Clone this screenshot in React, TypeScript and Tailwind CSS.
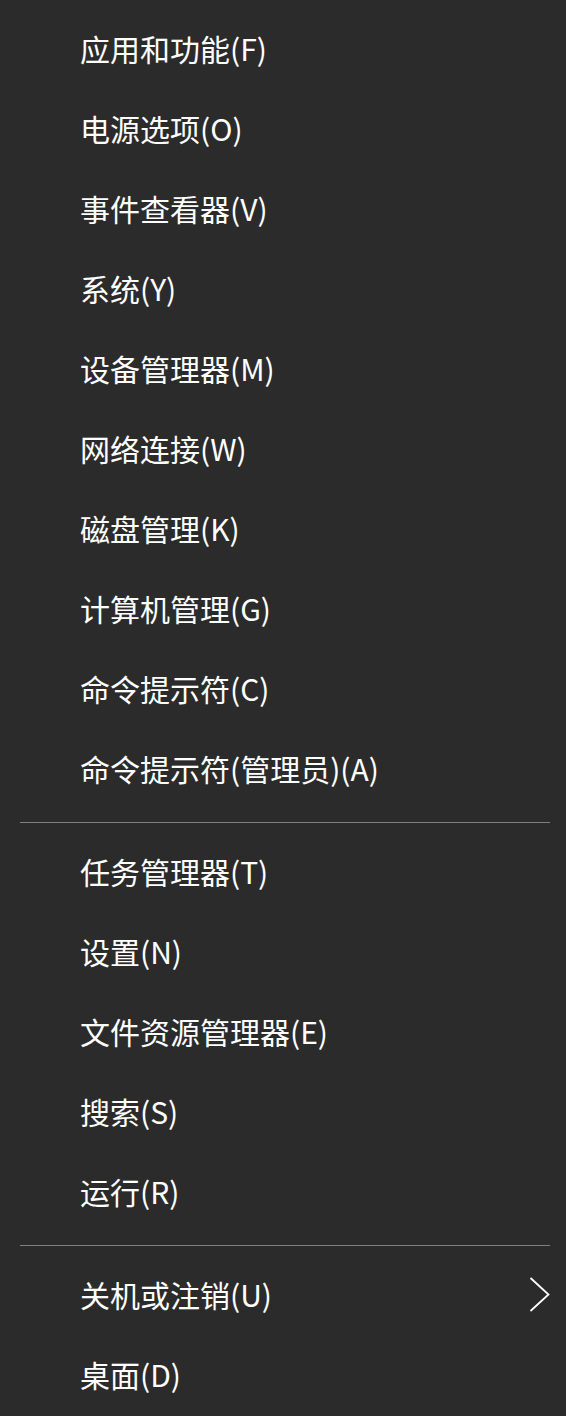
interface MenuItem {
  label: string;
  submenu?: boolean;
}

const groups: MenuItem[][] = [
  [
    { label: "应用和功能(F)" },
    { label: "电源选项(O)" },
    { label: "事件查看器(V)" },
    { label: "系统(Y)" },
    { label: "设备管理器(M)" },
    { label: "网络连接(W)" },
    { label: "磁盘管理(K)" },
    { label: "计算机管理(G)" },
    { label: "命令提示符(C)" },
    { label: "命令提示符(管理员)(A)" },
  ],
  [
    { label: "任务管理器(T)" },
    { label: "设置(N)" },
    { label: "文件资源管理器(E)" },
    { label: "搜索(S)" },
    { label: "运行(R)" },
  ],
  [{ label: "关机或注销(U)", submenu: true }, { label: "桌面(D)" }],
];

// thin chevron, like the Win+X flyout arrow
const Chevron = () => (
  <svg width="21" height="35" viewBox="0 0 21 35" fill="none">
    <polyline
      points="1.5,1 19.5,17.5 1.5,34"
      stroke="white"
      strokeWidth="1.8"
      strokeLinejoin="miter"
    />
  </svg>
);

const Row = ({ item }: { item: MenuItem }) => (
  <div className="flex h-[80px] items-center justify-between pl-[80px] pr-[16px]">
    <span className="text-[30px] leading-none text-white">{item.label}</span>
    {item.submenu && <Chevron />}
  </div>
);

const Separator = () => (
  <div className="mb-[8px] ml-[20px] mr-[16px] mt-[14px] h-px bg-[#808080]" />
);

const App = () => {
  return (
    <div
      className="min-h-screen w-[566px] bg-[#2b2b2b] pt-[8px]"
      style={{ fontFamily: '"Noto Sans CJK SC", "Noto Sans", sans-serif' }}
    >
      {groups.map((group, gi) => (
        <div key={gi}>
          {gi > 0 && <Separator />}
          {group.map((item) => (
            <Row key={item.label} item={item} />
          ))}
        </div>
      ))}
    </div>
  );
};

export default App;
